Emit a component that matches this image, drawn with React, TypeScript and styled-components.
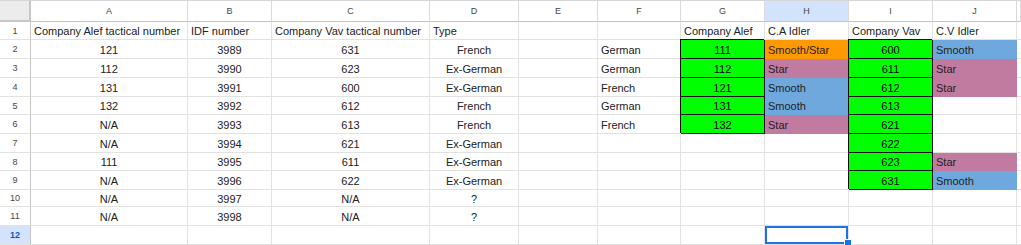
import React from 'react'
import styled, { createGlobalStyle, css } from 'styled-components'

const Global = createGlobalStyle`
  html, body { margin: 0; padding: 0; background: #fff; }
  body { font-family: 'Liberation Sans', Arial, sans-serif; overflow: hidden; }
`

const COLS = [31, 157, 84, 158, 89, 79, 83, 84, 84, 84, 84, 4]
const ROWS = [21, 18, 19, 19, 19, 18, 19, 19, 18, 19, 17, 19, 19]
const LETTERS = ['A', 'B', 'C', 'D', 'E', 'F', 'G', 'H', 'I', 'J', '']

const Sheet = styled.div`
  display: grid;
  grid-template-columns: ${COLS.map(c => c + 'px').join(' ')};
  grid-template-rows: ${ROWS.map(r => r + 'px').join(' ')};
  border-top: 1px solid #d6d6d6;
  width: 1021px;
`

const Corner = styled.div`
  background: #ececec;
  border-right: 2px solid #c7c7c7;
  border-bottom: 2px solid #c7c7c7;
  box-sizing: border-box;
`

const ColHead = styled.div<{ $active?: boolean }>`
  display: flex;
  align-items: center;
  justify-content: center;
  font-size: 9px;
  color: #444746;
  background: ${p => (p.$active ? '#d3e3fd' : '#fff')};
  border-right: 1px solid #dadada;
  border-bottom: 1px solid #c4c4c4;
  box-sizing: border-box;
`

const RowHead = styled.div<{ $active?: boolean }>`
  display: flex;
  align-items: center;
  justify-content: center;
  font-size: 9px;
  color: ${p => (p.$active ? '#0b57d0' : '#444746')};
  font-weight: ${p => (p.$active ? 700 : 400)};
  background: ${p => (p.$active ? '#d3e3fd' : '#fff')};
  border-right: 1px solid #c4c4c4;
  border-bottom: 1px solid #e2e2e2;
  box-sizing: border-box;
`

type Fill = 'green' | 'orange' | 'pink' | 'blue'
const FILLS: Record<Fill, string> = {
  green: '#00ff00',
  orange: '#ff9900',
  pink: '#c27ba0',
  blue: '#6fa8dc',
}

const Cell = styled.div<{ $align?: 'left' | 'center'; $fill?: Fill; $selected?: boolean }>`
  position: relative;
  display: flex;
  align-items: center;
  justify-content: ${p => (p.$align === 'center' ? 'center' : 'flex-start')};
  padding: 1px 3px 0;
  font-size: 11px;
  color: #222;
  white-space: nowrap;
  overflow: visible;
  box-sizing: border-box;
  background: #fff;
  border-right: 1px solid #e2e2e2;
  border-bottom: 1px solid #e2e2e2;
  ${p =>
    p.$fill &&
    css`
      background: ${FILLS[p.$fill]};
      border-color: ${FILLS[p.$fill]};
      color: #1f1f1f;
    `}
  ${p =>
    p.$fill === 'green' &&
    css`
      border-color: #111;
      box-shadow: -1px -1px 0 0 #111;
      color: #000;
    `}
  ${p =>
    p.$selected &&
    css`
      z-index: 1;
      box-shadow: inset 0 0 0 2px #1a73e8;
    `}
`

const Handle = styled.span`
  position: absolute;
  right: -4px;
  bottom: -3px;
  width: 6px;
  height: 6px;
  background: #1a73e8;
  border: 1px solid #fff;
  border-radius: 1px;
`

type C = { t?: string; a?: 'left' | 'center'; f?: Fill }

const header: C[] = [
  { t: 'Company Alef tactical number' },
  { t: 'IDF number' },
  { t: 'Company Vav tactical number' },
  { t: 'Type' },
  {},
  {},
  { t: 'Company Alef' },
  { t: 'C.A Idler' },
  { t: 'Company Vav' },
  { t: 'C.V Idler' },
]

const raw: [string, string, string, string, string, string, Fill | '', string, Fill | ''][] = [
  ['121', '3989', '631', 'French', 'German', '111', 'orange', '600', 'blue'],
  ['112', '3990', '623', 'Ex-German', 'German', '112', 'pink', '611', 'pink'],
  ['131', '3991', '600', 'Ex-German', 'French', '121', 'blue', '612', 'pink'],
  ['132', '3992', '612', 'French', 'German', '131', 'blue', '613', ''],
  ['N/A', '3993', '613', 'French', 'French', '132', 'pink', '621', ''],
  ['N/A', '3994', '621', 'Ex-German', '', '', '', '622', ''],
  ['111', '3995', '611', 'Ex-German', '', '', '', '623', 'pink'],
  ['N/A', '3996', '622', 'Ex-German', '', '', '', '631', 'blue'],
  ['N/A', '3997', 'N/A', '?', '', '', '', '', ''],
  ['N/A', '3998', 'N/A', '?', '', '', '', '', ''],
]

const idlerText: Record<string, string> = {
  orange: 'Smooth/Star',
  pink: 'Star',
  blue: 'Smooth',
}

function toRow(r: (typeof raw)[number]): C[] {
  const [a, b, c, d, f, g, h, i, j] = r
  return [
    { t: a, a: 'center' },
    { t: b, a: 'center' },
    { t: c, a: 'center' },
    { t: d, a: 'center' },
    {},
    { t: f },
    g ? { t: g, a: 'center', f: 'green' } : {},
    h ? { t: idlerText[h], f: h } : {},
    i ? { t: i, a: 'center', f: 'green' } : {},
    j ? { t: idlerText[j], f: j } : {},
  ]
}

const rows: C[][] = [header, ...raw.map(toRow), Array.from({ length: 10 }, () => ({}))]

export default function App() {
  return (
    <>
      <Global />
      <Sheet>
        <Corner />
        {LETTERS.map((l, i) => (
          <ColHead key={'h' + i} $active={l === 'H'}>
            {l}
          </ColHead>
        ))}
        {rows.map((row, ri) => (
          <React.Fragment key={ri}>
            <RowHead $active={ri === 11}>{ri + 1}</RowHead>
            {row.map((c, ci) => {
              const selected = ri === 11 && ci === 7
              return (
                <Cell key={ci} $align={c.a} $fill={c.f} $selected={selected}>
                  {c.t}
                  {selected && <Handle />}
                </Cell>
              )
            })}
            <Cell />
          </React.Fragment>
        ))}
      </Sheet>
    </>
  )
}
